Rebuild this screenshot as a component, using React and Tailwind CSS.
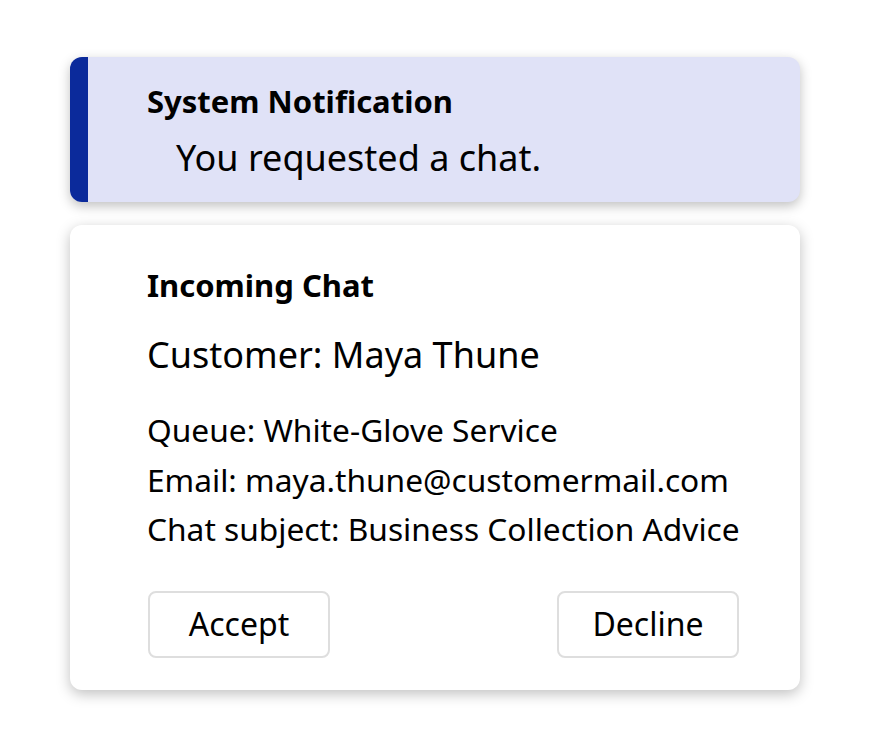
export default function App() {
  return (
    <div className="min-h-[747px] w-[875px] bg-white pt-[57px] pl-[70px]" style={{ fontFamily: '"Noto Sans", "Open Sans", sans-serif' }}>
      <div className="flex w-[730px] h-[145px] rounded-[12px] overflow-hidden bg-[#e0e2f7] shadow-[0_4px_12px_rgba(0,0,0,0.25)]">
        <div className="w-[18px] bg-[#0b2a9b]" />
        <div className="pl-[59px] pt-[26px] text-black whitespace-nowrap">
          <div className="text-[31px] leading-[36px] font-bold">System Notification</div>
          <div className="pl-[29px] mt-[17px] text-[36px] leading-[44px]">You requested a chat.</div>
        </div>
      </div>
      <div className="mt-[23px] w-[730px] h-[465px] rounded-[12px] bg-white shadow-[0_4px_14px_rgba(0,0,0,0.25)] pl-[77px] pr-[61px] pt-[42px] text-black whitespace-nowrap">
        <div className="text-[31px] leading-[36px] font-bold">Incoming Chat</div>
        <div className="mt-[30px] text-[36px] leading-[44px]">Customer: Maya Thune</div>
        <div className="mt-[28px] text-[31.7px] leading-[49.5px]">
          <div>Queue: White-Glove Service</div>
          <div>Email: maya.thune@customermail.com</div>
          <div>Chat subject: Business Collection Advice</div>
        </div>
        <div className="mt-[37px] flex justify-between">
          <button className="ml-[1px] w-[182px] h-[67px] rounded-[8px] border-2 border-[#dedede] bg-white text-[32px]">Accept</button>
          <button className="w-[182px] h-[67px] rounded-[8px] border-2 border-[#dedede] bg-white text-[32px]">Decline</button>
        </div>
      </div>
    </div>
  );
}
